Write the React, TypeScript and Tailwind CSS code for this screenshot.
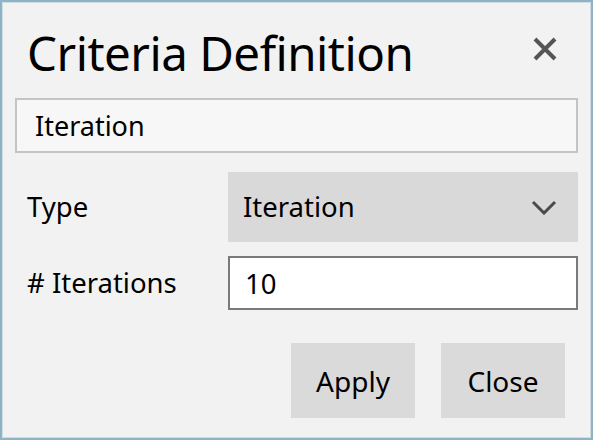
import { useState } from 'react'

export default function App() {
  const [name, setName] = useState('Iteration')
  const [iterations, setIterations] = useState('10')

  return (
    <div
      className="w-[593px] h-[440px] border-2 border-[#8fb3c2] bg-[#f2f2f2] text-black flex flex-col"
      style={{ fontFamily: '"Noto Sans", "Open Sans", sans-serif' }}
    >
      <div className="border border-[#cfdfe5] flex-1 flex flex-col px-[12px]">
        <div className="flex items-center justify-between h-[95px] pl-[12px] pr-[18px]">
          <h1 className="text-[47.5px] leading-none font-normal tracking-[-0.5px] mt-[4px]">Criteria Definition</h1>
          <button className="w-[30px] h-[30px] flex items-center justify-center -mt-[4px]">
            <svg width="24" height="24" viewBox="0 0 24 24">
              <path d="M2 2 L22 22 M22 2 L2 22" stroke="#555" strokeWidth="4" />
            </svg>
          </button>
        </div>

        <input
          value={name}
          onChange={(e) => setName(e.target.value)}
          className="h-[55px] w-full border-2 border-[#c4c4c4] bg-[#f7f7f7] px-[18px] text-[27px] outline-none"
        />

        <div className="grid grid-cols-[201px_1fr] gap-y-[14px] mt-[19px] pl-[12px]">
          <div className="text-[27.5px] flex items-center">Type</div>
          <div className="h-[70px] bg-[#d9d9d9] flex items-center justify-between pl-[15px] pr-[21px]">
            <span className="text-[27.5px]">Iteration</span>
            <svg width="26" height="15" viewBox="0 0 26 15">
              <path d="M2 2 L13 13 L24 2" stroke="#4a4a4a" strokeWidth="3" fill="none" />
            </svg>
          </div>

          <div className="text-[27.5px] flex items-center">
            # Iterations
          </div>
          <input
            value={iterations}
            onChange={(e) => setIterations(e.target.value)}
            className="h-[54px] w-full border-2 border-[#7a7a7a] bg-white px-[15px] text-[27.5px] outline-none"
          />
        </div>

        <div className="flex justify-end gap-[26px] mt-[33px] pr-[13px]">
          <button className="w-[124px] h-[75px] bg-[#dadada] text-[28px]">Apply</button>
          <button className="w-[124px] h-[75px] bg-[#dadada] text-[28px]">Close</button>
        </div>
      </div>
    </div>
  )
}
